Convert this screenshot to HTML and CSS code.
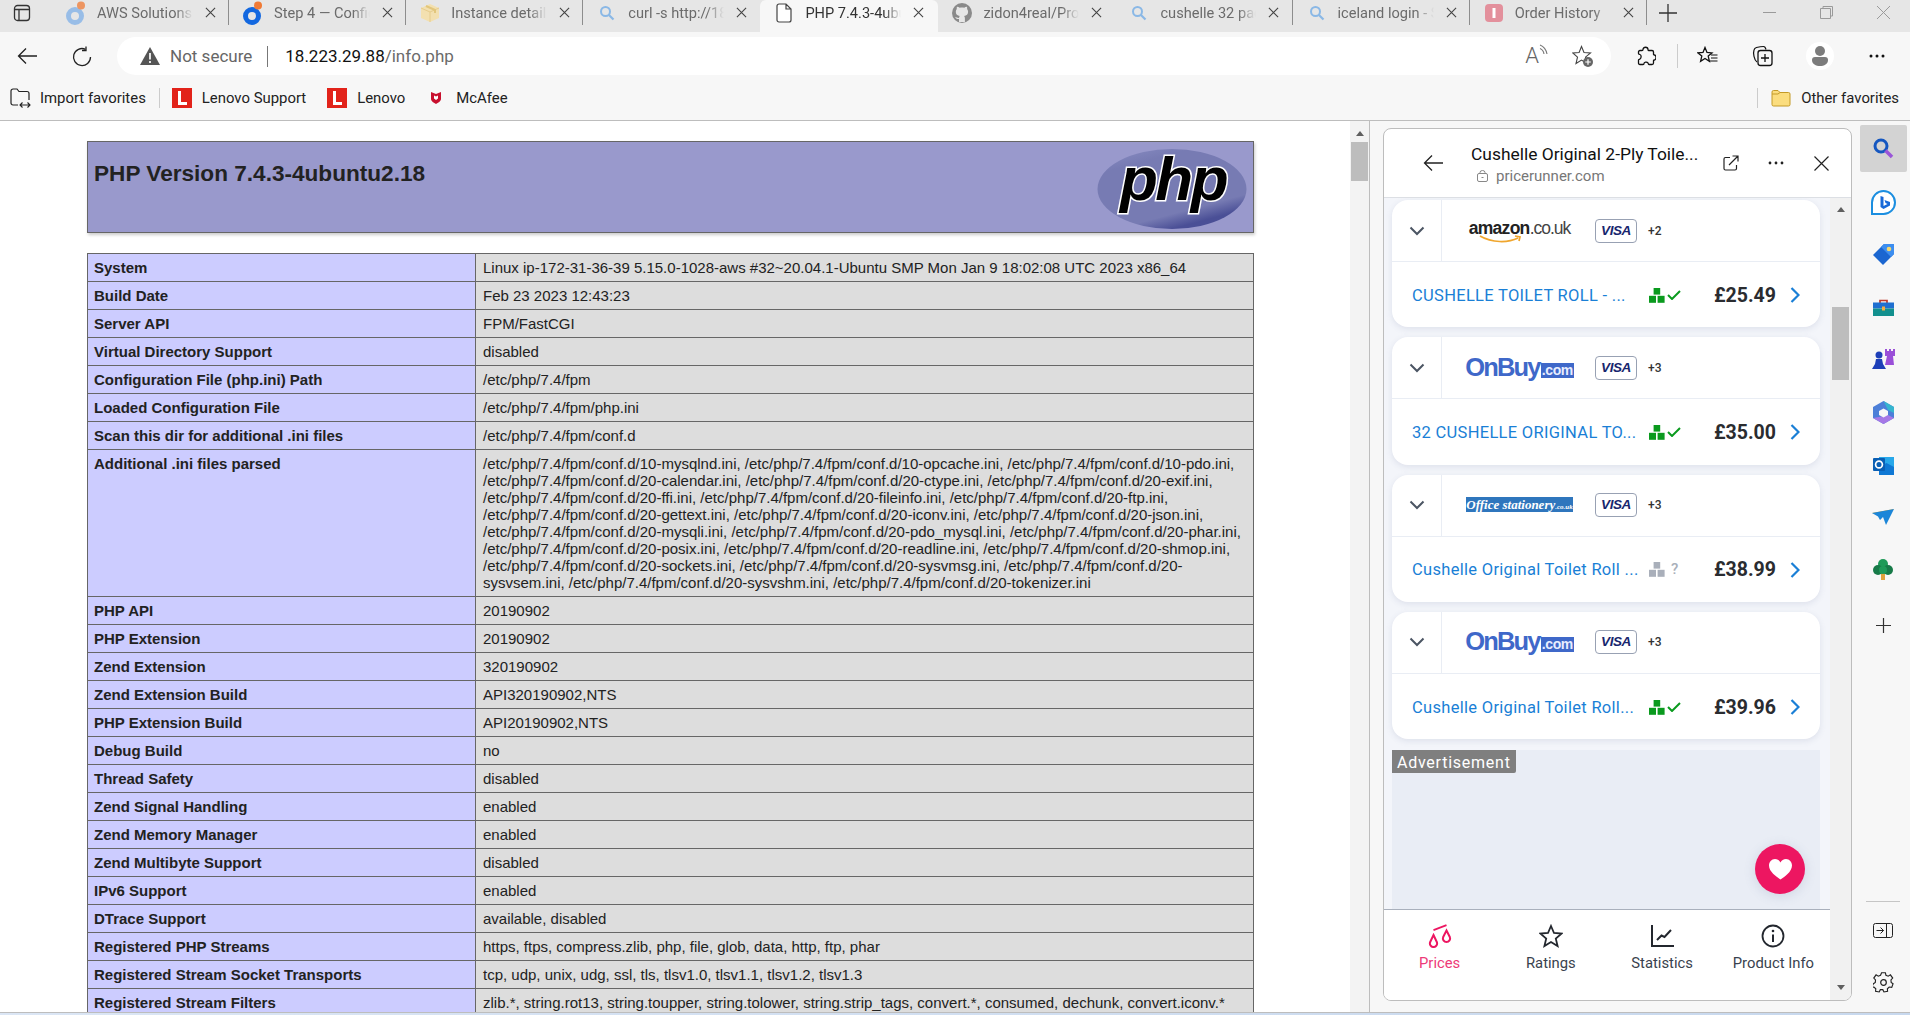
FILE: index.html
```html
<!DOCTYPE html>
<html lang="en">
<head>
<meta charset="utf-8">
<title>PHP 7.4.3-4ubuntu2.18 - phpinfo()</title>
<link rel="stylesheet" href="styles.css">
</head>
<body>
<svg class="defs" width="0" height="0" aria-hidden="true">
  <defs><linearGradient id="phpshade" x1="0" y1="0" x2="0.5" y2="1"><stop offset="0" stop-color="#8b8fc4"/><stop offset=".25" stop-color="#777bb3"/><stop offset=".85" stop-color="#777bb3"/><stop offset="1" stop-color="#4a4f96"/></linearGradient></defs>
  <symbol id="x" viewBox="0 0 12 12"><path d="M1 1l10 10M11 1L1 11" fill="none" stroke="currentColor" stroke-width="1.2"/></symbol>
  <symbol id="search" viewBox="0 0 16 16"><circle cx="6.5" cy="6.5" r="4.5" fill="none" stroke="#8ab8e6" stroke-width="2"/><path d="M10 10l4.5 4.5" stroke="#8ab8e6" stroke-width="2.2"/></symbol>
  <symbol id="swirl" viewBox="0 0 20 24"><circle cx="9" cy="15" r="6.5" fill="none" stroke="currentColor" stroke-width="5"/><circle cx="15" cy="4.5" r="4" fill="#f07a35"/></symbol>
  <symbol id="lenovo" viewBox="0 0 20 20"><rect width="20" height="20" fill="#e2231a"/><path d="M6 3v14h9v-3H9V3z" fill="#fff"/></symbol>
  <symbol id="chev-down" viewBox="0 0 16 10"><path d="M1.5 1.5L8 8l6.5-6.5" fill="none" stroke="#4b5563" stroke-width="2"/></symbol>
  <symbol id="chev-right" viewBox="0 0 10 16"><path d="M1.5 1L8.5 8l-7 7" fill="none" stroke="#1a7fd6" stroke-width="2.2"/></symbol>
  <symbol id="stock" viewBox="0 0 16 15"><rect x="4.6" y="0" width="6.6" height="6.6" fill="currentColor"/><rect x="0" y="7.8" width="7" height="7" fill="currentColor"/><rect x="8.6" y="7.8" width="7" height="7" fill="currentColor"/></symbol>
  <symbol id="check" viewBox="0 0 14 10"><path d="M1 5l4 4 8-8" fill="none" stroke="#0a9a1e" stroke-width="2"/></symbol>
</svg>

<header class="chrome">
  <div class="tabstrip">
    <div class="tabstrip-btn">
      <svg width="18" height="18" viewBox="0 0 18 18"><rect x="1.5" y="1.5" width="15" height="15" rx="3" fill="none" stroke="#333" stroke-width="1.3"/><path d="M1.5 5.5h15M6 5.5v11" stroke="#333" stroke-width="1.3" fill="none"/></svg>
    </div>
    <div class="tab">
      <svg class="fav fav-soft" width="20" height="24"><use href="#swirl"/></svg>
      <span class="tab-title">AWS Solutions</span>
      <svg class="tab-x" width="11" height="11"><use href="#x"/></svg>
    </div>
    <div class="tab">
      <svg class="fav fav-strong" width="20" height="24"><use href="#swirl"/></svg>
      <span class="tab-title">Step 4 — Configure</span>
      <svg class="tab-x" width="11" height="11"><use href="#x"/></svg>
    </div>
    <div class="tab">
      <svg class="fav" width="20" height="20" viewBox="0 0 20 20"><path d="M10 1l9 4v10l-9 4-9-4V5z" fill="#f3e0b0"/><path d="M1 5l9 4 9-4M10 9v10" fill="none" stroke="#e6cc8c"/><path d="M6 3l9 4v3" fill="none" stroke="#e2c67c" stroke-width="2"/></svg>
      <span class="tab-title">Instance details</span>
      <svg class="tab-x" width="11" height="11"><use href="#x"/></svg>
    </div>
    <div class="tab tab-before-active">
      <svg class="fav" width="16" height="16"><use href="#search"/></svg>
      <span class="tab-title">curl -s http://18.223</span>
      <svg class="tab-x" width="11" height="11"><use href="#x"/></svg>
    </div>
    <div class="tab tab-active">
      <svg class="fav" width="16" height="20" viewBox="0 0 16 20"><path d="M3 1h7l5 5v11a2 2 0 0 1-2 2H3a2 2 0 0 1-2-2V3a2 2 0 0 1 2-2zM10 1v5h5" fill="#fff" stroke="#444" stroke-width="1.2"/></svg>
      <span class="tab-title">PHP 7.4.3-4ubuntu2.18</span>
      <svg class="tab-x" width="11" height="11"><use href="#x"/></svg>
    </div>
    <div class="tab tab-after-active">
      <svg class="fav" width="20" height="20" viewBox="0 0 20 20"><circle cx="10" cy="10" r="10" fill="#8a8a8a"/><path d="M7 19v-3c-2 .3-3.200-.5-4-2 1.500 0 1.800 1 4 1 0-1 .4-1.600.8-2-2.500-.4-4-1.600-4-4.300 0-1 .4-1.900 1-2.600-.2-.8-.1-1.700.2-2.300 1 0 1.900.5 2.700 1 1.500-.4 3-.4 4.500 0 .8-.5 1.700-1 2.700-1 .3.600.4 1.500.2 2.300.6.700 1 1.600 1 2.600 0 2.700-1.500 3.900-4 4.300.5.500.8 1.200.8 2.200V19z" fill="#e6e6e6"/></svg>
      <span class="tab-title">zidon4real/Project</span>
      <svg class="tab-x" width="11" height="11"><use href="#x"/></svg>
    </div>
    <div class="tab">
      <svg class="fav" width="16" height="16"><use href="#search"/></svg>
      <span class="tab-title">cushelle 32 pack</span>
      <svg class="tab-x" width="11" height="11"><use href="#x"/></svg>
    </div>
    <div class="tab">
      <svg class="fav" width="16" height="16"><use href="#search"/></svg>
      <span class="tab-title">iceland login - Search</span>
      <svg class="tab-x" width="11" height="11"><use href="#x"/></svg>
    </div>
    <div class="tab">
      <svg class="fav" width="18" height="18" viewBox="0 0 18 18"><rect width="18" height="18" rx="4" fill="#e3909c"/><rect x="7.500" y="4" width="3" height="10" fill="#fff"/></svg>
      <span class="tab-title">Order History</span>
      <svg class="tab-x" width="11" height="11"><use href="#x"/></svg>
    </div>
    <div class="tab-plus">
      <svg width="18" height="18" viewBox="0 0 18 18"><path d="M9 0v18M0 9h18" stroke="#333" stroke-width="1.3"/></svg>
    </div>
    <div class="win-btns">
      <svg width="13" height="13" viewBox="0 0 13 13"><path d="M0 6.500h13" stroke="#9a9a9a"/></svg>
      <svg width="13" height="13" viewBox="0 0 13 13"><path d="M3 2V.5h9.500V10H11M.5 2.500h10v10H.5z" fill="none" stroke="#9a9a9a"/></svg>
      <svg width="13" height="13" viewBox="0 0 13 13"><path d="M0 0l13 13M13 0L0 13" stroke="#9a9a9a"/></svg>
    </div>
  </div>

  <div class="toolbar">
    <div class="tool">
      <svg width="20" height="18" viewBox="0 0 20 18"><path d="M20 9H1.500M9 1.500L1.500 9 9 16.500" fill="none" stroke="#222" stroke-width="1.3"/></svg>
    </div>
    <div class="tool tool-next">
      <svg width="20" height="21" viewBox="0 0 20 21"><path d="M13.500 3.300A8.500 8.500 0 1 0 18.500 11" fill="none" stroke="#222" stroke-width="1.3"/><path d="M14 .5v4h-4" fill="none" stroke="#222" stroke-width="1.3"/></svg>
    </div>
    <div class="address">
      <svg width="20" height="18" viewBox="0 0 20 18"><path d="M10 0l10 18H0z" fill="#555"/><path d="M10 6v6.500M10 14v2" stroke="#fff" stroke-width="1.700"/></svg>
      <span class="not-secure">Not secure</span>
      <span class="addr-sep"></span>
      <span class="url"><span class="url-host">18.223.29.88</span>/info.php</span>
      <span class="addr-end">
        <span class="read-aloud">A<svg width="9" height="14" viewBox="0 0 9 14"><path d="M1 1c4 1.500 6 4 7 9M1 4.500c2.500 1 3.500 2.500 4 5.500" fill="none" stroke="#777" stroke-width="1.100"/></svg></span>
        <svg width="21" height="22" viewBox="0 0 21 22"><path d="M9.500 1.500l2.500 6 6.500.5-5 4.200 1.500 6.300-5.500-3.400L4 18.500l1.500-6.300L.8 8l6.300-.5z" fill="none" stroke="#444" stroke-width="1.100"/><circle cx="16" cy="17" r="5" fill="#666"/><path d="M16 14.200v5.600M13.200 17h5.600" stroke="#fff" stroke-width="1.200"/></svg>
      </span>
    </div>
    <div class="tool tool-ext">
      <svg width="19" height="20" viewBox="0 0 19 20"><path d="M6 3.500c0-3 5-3 5 0 0 .5 0 1 .5 1H15c1 0 1.500.5 1.500 1.500v2.500c0 .5.500.5 1 .5 2 .5 2 4.500 0 5-.5 0-1 0-1 .5V17c0 1-.5 1.500-1.500 1.500h-3c-1 0-.5-1-1-1.500-1-1.500-4-1-4 .5 0 .5 0 1-1 1H3c-1 0-1.500-.5-1.500-1.500V14c0-1 1-.5 1.500-1 1.500-1 1.500-4 0-4.500-.5-.2-1.500 0-1.500-1V6c0-1 .5-1.500 1.500-1.500H5c.5 0 1 0 1-1z" fill="none" stroke="#111" stroke-width="1.300"/></svg>
    </div>
    <span class="tool-sep"></span>
    <div class="tool tool-fav">
      <svg width="21" height="20" viewBox="0 0 21 20"><path d="M8 1.500l2 5 5 .4-3.800 3.200 1.200 5.200L8 12.500l-4.400 2.800 1.200-5.200L1 6.900l5-.4z" fill="none" stroke="#111" stroke-width="1.300"/><path d="M14 9h6.500M14 12h6.500M13 15h7.500" stroke="#111" stroke-width="1.200"/></svg>
    </div>
    <div class="tool tool-coll">
      <svg width="21" height="22" viewBox="0 0 21 22"><path d="M5 17C2 15 1 8 2 5c.3-1 1-2 2.500-2.500 2-.5 5-1 7-1 1.500 0 2 1 2.500 3" fill="none" stroke="#111" stroke-width="1.200"/><rect x="6" y="5.500" width="14" height="15" rx="2.500" fill="none" stroke="#111" stroke-width="1.300"/><path d="M13 9v8M9 13h8" stroke="#111" stroke-width="1.300"/></svg>
    </div>
    <div class="tool tool-profile">
      <span class="avatar"><svg width="18" height="22" viewBox="0 0 18 22"><circle cx="9" cy="6" r="5" fill="#7c7c7c"/><path d="M1 15c0-2 1-3 3-3h10c2 0 3 1 3 3 0 4-4 6-8 6s-8-2-8-6z" fill="#7c7c7c"/></svg></span>
    </div>
    <div class="tool tool-more">
      <svg width="16" height="4" viewBox="0 0 16 4"><circle cx="2" cy="2" r="1.500" fill="#111"/><circle cx="8" cy="2" r="1.500" fill="#111"/><circle cx="14" cy="2" r="1.500" fill="#111"/></svg>
    </div>
  </div>

  <div class="favbar">
    <svg class="fb-ico" width="21" height="20" viewBox="0 0 21 20"><path d="M8 17H3a2 2 0 0 1-2-2V3a2 2 0 0 1 2-2h4l2 2.500h8a2 2 0 0 1 2 2V12" fill="none" stroke="#222" stroke-width="1.200"/><path d="M10 17h10M12.500 14.500L10 17l2.500 2.500M17.500 14.500L20 17l-2.500 2.500" fill="none" stroke="#222" stroke-width="1.100"/></svg>
    <span class="fb-text">Import favorites</span>
    <span class="fb-sep"></span>
    <svg class="fb-lenovo" width="20" height="20"><use href="#lenovo"/></svg>
    <span class="fb-text">Lenovo Support</span>
    <svg class="fb-lenovo fb-lenovo-2" width="20" height="20"><use href="#lenovo"/></svg>
    <span class="fb-text">Lenovo</span>
    <svg class="fb-mcafee" width="10" height="12" viewBox="0 0 10 12"><path d="M0 0l5 2 5-2v7c0 2-3 4-5 5-2-1-5-3-5-5z" fill="#c8102e"/><path d="M3 3.500l2 1 2-1v3L5 8 3 6.500z" fill="#fff"/></svg>
    <span class="fb-text">McAfee</span>
    <span class="fb-sep fb-sep-right"></span>
    <svg class="fb-folder" width="20" height="18" viewBox="0 0 20 18"><path d="M1 3a1.500 1.500 0 0 1 1.500-1.500H7l2 2h8.500A1.500 1.500 0 0 1 19 5v10.500a1.500 1.500 0 0 1-1.500 1.500h-15A1.500 1.500 0 0 1 1 15.500z" fill="#fbdd7e" stroke="#c49a26"/><path d="M1 5h6l2-1.500" fill="none" stroke="#c49a26"/></svg>
    <span class="fb-text">Other favorites</span>
  </div>
</header>

<main class="workspace">
  <div class="page">
    <div class="phpinfo">
      <div class="php-head">
        <svg class="php-logo" width="150" height="82" viewBox="0 0 150 82">
          <ellipse cx="75" cy="41" rx="74.500" ry="40" fill="url(#phpshade)"/>
          <text class="php-logo-text" x="76" y="52" text-anchor="middle">php</text>
        </svg>
        <h1>PHP Version 7.4.3-4ubuntu2.18</h1>
      </div>
      <table class="info">
        <tr><th>System</th><td>Linux ip-172-31-36-39 5.15.0-1028-aws #32~20.04.1-Ubuntu SMP Mon Jan 9 18:02:08 UTC 2023 x86_64</td></tr>
        <tr><th>Build Date</th><td>Feb 23 2023 12:43:23</td></tr>
        <tr><th>Server API</th><td>FPM/FastCGI</td></tr>
        <tr><th>Virtual Directory Support</th><td>disabled</td></tr>
        <tr><th>Configuration File (php.ini) Path</th><td>/etc/php/7.4/fpm</td></tr>
        <tr><th>Loaded Configuration File</th><td>/etc/php/7.4/fpm/php.ini</td></tr>
        <tr><th>Scan this dir for additional .ini files</th><td>/etc/php/7.4/fpm/conf.d</td></tr>
        <tr><th>Additional .ini files parsed</th><td>/etc/php/7.4/fpm/conf.d/10-mysqlnd.ini, /etc/php/7.4/fpm/conf.d/10-opcache.ini, /etc/php/7.4/fpm/conf.d/10-pdo.ini,<br>/etc/php/7.4/fpm/conf.d/20-calendar.ini, /etc/php/7.4/fpm/conf.d/20-ctype.ini, /etc/php/7.4/fpm/conf.d/20-exif.ini,<br>/etc/php/7.4/fpm/conf.d/20-ffi.ini, /etc/php/7.4/fpm/conf.d/20-fileinfo.ini, /etc/php/7.4/fpm/conf.d/20-ftp.ini,<br>/etc/php/7.4/fpm/conf.d/20-gettext.ini, /etc/php/7.4/fpm/conf.d/20-iconv.ini, /etc/php/7.4/fpm/conf.d/20-json.ini,<br>/etc/php/7.4/fpm/conf.d/20-mysqli.ini, /etc/php/7.4/fpm/conf.d/20-pdo_mysql.ini, /etc/php/7.4/fpm/conf.d/20-phar.ini,<br>/etc/php/7.4/fpm/conf.d/20-posix.ini, /etc/php/7.4/fpm/conf.d/20-readline.ini, /etc/php/7.4/fpm/conf.d/20-shmop.ini,<br>/etc/php/7.4/fpm/conf.d/20-sockets.ini, /etc/php/7.4/fpm/conf.d/20-sysvmsg.ini, /etc/php/7.4/fpm/conf.d/20-<br>sysvsem.ini, /etc/php/7.4/fpm/conf.d/20-sysvshm.ini, /etc/php/7.4/fpm/conf.d/20-tokenizer.ini</td></tr>
        <tr><th>PHP API</th><td>20190902</td></tr>
        <tr><th>PHP Extension</th><td>20190902</td></tr>
        <tr><th>Zend Extension</th><td>320190902</td></tr>
        <tr><th>Zend Extension Build</th><td>API320190902,NTS</td></tr>
        <tr><th>PHP Extension Build</th><td>API20190902,NTS</td></tr>
        <tr><th>Debug Build</th><td>no</td></tr>
        <tr><th>Thread Safety</th><td>disabled</td></tr>
        <tr><th>Zend Signal Handling</th><td>enabled</td></tr>
        <tr><th>Zend Memory Manager</th><td>enabled</td></tr>
        <tr><th>Zend Multibyte Support</th><td>disabled</td></tr>
        <tr><th>IPv6 Support</th><td>enabled</td></tr>
        <tr><th>DTrace Support</th><td>available, disabled</td></tr>
        <tr><th>Registered PHP Streams</th><td>https, ftps, compress.zlib, php, file, glob, data, http, ftp, phar</td></tr>
        <tr><th>Registered Stream Socket Transports</th><td>tcp, udp, unix, udg, ssl, tls, tlsv1.0, tlsv1.1, tlsv1.2, tlsv1.3</td></tr>
        <tr><th>Registered Stream Filters</th><td>zlib.*, string.rot13, string.toupper, string.tolower, string.strip_tags, convert.*, consumed, dechunk, convert.iconv.*</td></tr>
      </table>
    </div>
  </div>

  <div class="page-scroll">
    <span class="arrow-up"></span>
    <span class="page-thumb"></span>
  </div>

  <div class="side-area">
    <section class="panel">
      <div class="panel-head">
        <svg class="ph-back" width="20" height="18" viewBox="0 0 20 18"><path d="M20 9H1.500M9 1.500L1.500 9 9 16.500" fill="none" stroke="#222" stroke-width="1.300"/></svg>
        <div class="ph-title">
          <div class="ph-name">Cushelle Original 2-Ply Toile...</div>
          <div class="ph-site">
            <svg width="11" height="12" viewBox="0 0 11 12"><rect x=".5" y="3.500" width="10" height="8" rx="1.500" fill="none" stroke="#888"/><path d="M3 3.500V2.500a2.500 2 0 0 1 5 0v1M4.500 7.500h2" fill="none" stroke="#888"/></svg>
            <span>pricerunner.com</span>
          </div>
        </div>
        <svg class="ph-ext" width="16" height="16" viewBox="0 0 16 16"><path d="M7 2.500H2.500A1.500 1.500 0 0 0 1 4v9.500A1.500 1.500 0 0 0 2.500 15H12a1.500 1.500 0 0 0 1.500-1.500V10M6 10L15 1M9.500 1H15v5.500" fill="none" stroke="#222" stroke-width="1.200"/></svg>
        <svg class="ph-more" width="16" height="4" viewBox="0 0 16 4"><circle cx="2" cy="2" r="1.400" fill="#222"/><circle cx="8" cy="2" r="1.400" fill="#222"/><circle cx="14" cy="2" r="1.400" fill="#222"/></svg>
        <svg class="ph-close" width="15" height="15" viewBox="0 0 15 15"><path d="M.5.5l14 14M14.500.5l-14 14" stroke="#222" stroke-width="1.200"/></svg>
      </div>
      <div class="panel-body">
        <div class="panel-main">
          <div class="offers">
            <article class="card">
              <div class="card-top">
                <div class="card-chev"><svg width="16" height="10"><use href="#chev-down"/></svg></div>
                <div class="logo"><span class="amazon">amazon<span class="amazon-tld">.co.uk</span><svg class="amazon-smile" width="44" height="8" viewBox="0 0 44 8"><path d="M1 1c12 7 28 7 38 2M36 1l5 1-1 4" fill="none" stroke="#f0a62e" stroke-width="1.700"/></svg></span></div>
                <span class="visa">VISA</span><span class="plus">+2</span>
              </div>
              <div class="card-bottom">
                <span class="offer-name">CUSHELLE TOILET ROLL - ...</span>
                <svg class="stock" width="16" height="15"><use href="#stock"/></svg>
                <svg class="check" width="14" height="10"><use href="#check"/></svg>
                <span class="price">£25.49</span>
                <svg class="go" width="10" height="16"><use href="#chev-right"/></svg>
              </div>
            </article>
            <article class="card">
              <div class="card-top">
                <div class="card-chev"><svg width="16" height="10"><use href="#chev-down"/></svg></div>
                <div class="logo"><span class="onbuy">OnBuy<span class="onbuy-tld">.com</span></span></div>
                <span class="visa">VISA</span><span class="plus">+3</span>
              </div>
              <div class="card-bottom">
                <span class="offer-name">32 CUSHELLE ORIGINAL TO...</span>
                <svg class="stock" width="16" height="15"><use href="#stock"/></svg>
                <svg class="check" width="14" height="10"><use href="#check"/></svg>
                <span class="price">£35.00</span>
                <svg class="go" width="10" height="16"><use href="#chev-right"/></svg>
              </div>
            </article>
            <article class="card">
              <div class="card-top">
                <div class="card-chev"><svg width="16" height="10"><use href="#chev-down"/></svg></div>
                <div class="logo"><span class="office">Office stationery<small>.co.uk</small></span></div>
                <span class="visa">VISA</span><span class="plus">+3</span>
              </div>
              <div class="card-bottom">
                <span class="offer-name">Cushelle Original Toilet Roll ...</span>
                <svg class="stock stock-unknown" width="16" height="15"><use href="#stock"/></svg>
                <span class="unknown">?</span>
                <span class="price">£38.99</span>
                <svg class="go" width="10" height="16"><use href="#chev-right"/></svg>
              </div>
            </article>
            <article class="card">
              <div class="card-top">
                <div class="card-chev"><svg width="16" height="10"><use href="#chev-down"/></svg></div>
                <div class="logo"><span class="onbuy">OnBuy<span class="onbuy-tld">.com</span></span></div>
                <span class="visa">VISA</span><span class="plus">+3</span>
              </div>
              <div class="card-bottom">
                <span class="offer-name">Cushelle Original Toilet Roll...</span>
                <svg class="stock" width="16" height="15"><use href="#stock"/></svg>
                <svg class="check" width="14" height="10"><use href="#check"/></svg>
                <span class="price">£39.96</span>
                <svg class="go" width="10" height="16"><use href="#chev-right"/></svg>
              </div>
            </article>
            <div class="ad"><span class="ad-label">Advertisement</span></div>
            <button class="fab" type="button" aria-label="Favourite">
              <svg width="23" height="21" viewBox="0 0 23 21"><path d="M11.500 20.500C8 18 0 13 0 6.500 0 3 2.500 0 6 0c2.500 0 4.500 1.500 5.500 3.500C12.500 1.500 14.500 0 17 0c3.500 0 6 3 6 6.500 0 6.500-8 11.500-11.500 14z" fill="#fff"/></svg>
            </button>
          </div>
          <nav class="pr-tabs">
            <div class="pr-tab pr-tab-on">
              <svg width="24" height="24" viewBox="0 0 24 24"><path d="M5.500 6.200L18.500 1.200" stroke="#ed1661" stroke-width="1.800"/><path d="M5.500 11l3.300 7a3.600 3.600 0 1 1-6.600 0z" fill="none" stroke="#ed1661" stroke-width="2"/><path d="M18.500 6.500l3.300 6.500a3.600 3.600 0 1 1-6.600 0z" fill="none" stroke="#ed1661" stroke-width="2"/></svg>
              <span>Prices</span>
            </div>
            <div class="pr-tab">
              <svg width="24" height="24" viewBox="0 0 24 24"><path d="M12 2l3 7 7.500.6-5.700 5 1.800 7.400-6.600-4-6.600 4 1.800-7.400-5.700-5L9 9z" fill="none" stroke="#23272e" stroke-width="1.800"/></svg>
              <span>Ratings</span>
            </div>
            <div class="pr-tab">
              <svg width="24" height="24" viewBox="0 0 24 24"><path d="M2 1v21h22" fill="none" stroke="#23272e" stroke-width="2"/><path d="M7 16l4.500-4.500 3 1.500L21 6" fill="none" stroke="#23272e" stroke-width="2"/></svg>
              <span>Statistics</span>
            </div>
            <div class="pr-tab">
              <svg width="24" height="24" viewBox="0 0 24 24"><circle cx="12" cy="12" r="10.500" fill="none" stroke="#23272e" stroke-width="1.800"/><path d="M12 10.500V18" stroke="#23272e" stroke-width="2"/><circle cx="12" cy="7" r="1.300" fill="#23272e"/></svg>
              <span>Product Info</span>
            </div>
          </nav>
        </div>
        <div class="panel-scroll">
          <span class="arrow-up"></span>
          <span class="panel-thumb"></span>
          <span class="arrow-down"></span>
        </div>
      </div>
    </section>

    <aside class="sidebar">
      <div class="side-item side-on"><svg width="21" height="21" viewBox="0 0 21 21"><circle cx="8" cy="8" r="6" fill="none" stroke="#1557c0" stroke-width="3"/><path d="M12.500 12.500l6.500 6.500" stroke="#9a55d8" stroke-width="3.500"/></svg></div>
      <div class="side-item"><svg width="25" height="25" viewBox="0 0 25 25"><path d="M12.500 1a11.500 11.500 0 0 1 0 23H1V12.500A11.500 11.500 0 0 1 12.500 1z" fill="#fff" stroke="#1b8ee0" stroke-width="2"/><path d="M9.500 6l3 1v9l4-2-2-1-1-3 5.500 2v3.500l-6.500 3.500-3-2z" fill="#1668d8"/></svg></div>
      <div class="side-item"><svg width="21" height="21" viewBox="0 0 21 21"><path d="M11 0h10v10L10 21 0 11z" fill="#1b66d0"/><path d="M11 0h10v10l-3 3L8 3z" fill="#3d8ef0"/><circle cx="16" cy="5" r="2.300" fill="#f5d76e"/></svg></div>
      <div class="side-item"><svg width="21" height="17" viewBox="0 0 21 17"><path d="M7 4V1.500h7V4" fill="none" stroke="#c0392b" stroke-width="1.700"/><rect y="3.500" width="21" height="6" fill="#1f6fd0"/><rect y="9.500" width="21" height="7.500" fill="#12908e"/><rect x="9" y="7.500" width="3" height="4" fill="#f5b041"/></svg></div>
      <div class="side-item"><svg width="23" height="23" viewBox="0 0 23 23"><circle cx="7" cy="7" r="3.500" fill="#1d3fb8"/><path d="M4 11h6l1 5 3 5H0l3-5z" fill="#1d3fb8"/><path d="M13 1h2v2h2V1h2v2h2V1h2v7h-2l1 9H13l2-9h-2z" fill="#9a4fd8"/></svg></div>
      <div class="side-item"><svg width="21" height="23" viewBox="0 0 21 23"><path d="M10.500 0L21 6v11l-10.500 6L0 17V6z" fill="#4d7fd8"/><path d="M10.500 0L21 6v6l-6-3z" fill="#36b5cf"/><path d="M0 17l10.500 6L21 17l-6-3-9 2z" fill="#a678e6"/><path d="M10.500 7.500l4.500 2.500v4l-4.500 2.500L6 14v-4z" fill="#f7f7f7"/></svg></div>
      <div class="side-item"><svg width="21" height="21" viewBox="0 0 21 21"><rect x="6" y="3" width="15" height="16" fill="#28a8ea"/><path d="M6 13l7.500-4L21 13v8H6z" fill="#0f78d4"/><rect y="4" width="12" height="13" rx="1" fill="#0a5fb4"/><circle cx="6" cy="10.500" r="3.400" fill="none" stroke="#fff" stroke-width="1.700"/></svg></div>
      <div class="side-item"><svg width="22" height="16" viewBox="0 0 22 16"><path d="M0 4l22-4-9 7z" fill="#f2a91f"/><path d="M0 4l6 3.500 2 3.500 3-3 3 8 8-16z" fill="#1c86d8"/></svg></div>
      <div class="side-item"><svg width="20" height="21" viewBox="0 0 20 21"><rect x="8" y="14" width="4" height="7" fill="#e0a23c"/><circle cx="10" cy="5" r="5" fill="#1e9a58"/><circle cx="5" cy="11" r="5" fill="#177a48"/><circle cx="15" cy="11" r="5" fill="#177a48"/><circle cx="10" cy="11" r="4" fill="#1e9a58"/></svg></div>
      <div class="side-item side-add"><svg width="15" height="15" viewBox="0 0 15 15"><path d="M7.500 0v15M0 7.500h15" stroke="#333" stroke-width="1.200"/></svg></div>
      <div class="side-spacer"></div>
      <div class="side-rule"></div>
      <div class="side-item"><svg width="20" height="15" viewBox="0 0 20 15"><rect x=".5" y=".5" width="19" height="14" rx="2" fill="none" stroke="#222"/><path d="M13.500.5v14M3.500 7.500h7M7.500 4.500l3 3-3 3" fill="none" stroke="#222"/></svg></div>
      <div class="side-item"><svg width="21" height="21" viewBox="0 0 21 21"><path d="M8.500 1h4l.6 2.600 2.400 1 2.300-1.400 2.400 3.400-1.800 2 .2 2.600 2 1.400-1.400 3.800-2.700-.4-1.900 1.900.2 2.600-3.800.7-1.200-2.400h-2.600l-1.200 2.400-3.800-.7.200-2.600-1.900-1.900-2.700.4L-.1 12.600l2-1.400.2-2.600-1.800-2L2.700 3.200 5 4.600l2.400-1z" transform="translate(.5 -.2) scale(.95)" fill="none" stroke="#222" stroke-width="1.200"/><circle cx="10.500" cy="10.500" r="2.800" fill="none" stroke="#222" stroke-width="1.200"/></svg></div>
    </aside>
  </div>
</main>
<div class="taskbar"></div>
</body>
</html>
```
FILE: styles.css
```css
* { box-sizing: border-box; }
html, body { margin: 0; padding: 0; height: 100%; overflow: hidden; background: #fff; }
body { display: flex; flex-direction: column; font-family: Roboto, "Noto Sans", sans-serif; color: #222; }
.defs { position: absolute; }
svg { display: block; flex: none; }

/* window chrome */
.chrome { flex: none; background: #f7f7f7; border-bottom: 1px solid #bdbdbd; }
.tabstrip { height: 32px; background: #e6e6e6; display: flex; align-items: center; padding-bottom: 7px; overflow: visible; }
.tabstrip-btn { width: 52px; height: 25px; display: flex; align-items: center; justify-content: center; padding-right: 8px; }
.tab { width: 177.1px; height: 32px; margin-bottom: -7px; display: flex; align-items: center; position: relative; padding: 0 0 7px 14px; color: #6b6b6b; font-size: 14.6px; }
.tab::after { content: ""; position: absolute; right: 0; top: 0; height: 25px; width: 1px; background: #8d8d8d; }
.tab-before-active::after, .tab-active::after, .tab-after-active::after { display: none; }
.tab-before-active { border-bottom-right-radius: 6px; }
.tab-active { background: #f7f7f7; color: #333; border-radius: 6px 6px 0 0; width: 178px; }
.fav { margin-right: 11px; margin-left: 0; width: 20px; }
.fav-soft { color: #7fb0e8; opacity: .75; }
.fav-strong { color: #1368e0; }
.tab-title { width: 96px; overflow: hidden; white-space: nowrap; -webkit-mask-image: linear-gradient(to right, #000 82%, transparent); mask-image: linear-gradient(to right, #000 82%, transparent); }
.tab-x { margin-left: 12px; color: #444; }
.tab-plus { width: 50px; display: flex; justify-content: center; padding-right: 8px; }
.win-btns { flex: 1; display: flex; justify-content: flex-end; gap: 44px; padding-right: 20px; }

.toolbar { height: 48px; display: flex; align-items: center; padding-left: 7px; }
.tool { width: 40px; height: 38px; display: flex; align-items: center; justify-content: center; flex: none; }
.tool-next { margin-left: 15px; }
.address { flex: 1; height: 38px; margin-left: 15px; background: #fff; border-radius: 19px; display: flex; align-items: center; padding: 0 18px 0 23px; font-size: 17px; }
.not-secure { margin-left: 10px; color: #666; }
.addr-sep { width: 1px; height: 21px; background: #777; margin: 0 17px 0 15px; }
.url { color: #6b6b6b; }
.url-host { color: #111; }
.addr-end { margin-left: auto; display: flex; align-items: center; gap: 24px; }
.read-aloud { display: flex; align-items: flex-start; color: #666; font-size: 22px; line-height: 24px; font-weight: 300; }
.tool-ext { margin-left: 15px; }
.tool-sep { width: 1px; height: 24px; background: #ccc; margin-left: 11px; flex: none; }
.tool-fav { margin-left: 9px; }
.tool-coll { margin-left: 15px; }
.tool-profile { margin-left: 18px; }
.tool-more { margin: 0 13px 0 17px; }
.avatar { width: 28px; height: 28px; border-radius: 50%; background: #fff; display: flex; align-items: center; justify-content: center; }

.favbar { height: 40px; display: flex; align-items: center; padding: 0 11px 4px 10px; font-size: 14.9px; color: #222; }
.fb-text { white-space: nowrap; }
.fb-ico { margin-right: 9px; }
.fb-sep { width: 1px; height: 20px; background: #ccc; margin: 0 12px 0 13px; flex: none; }
.fb-lenovo { margin-right: 10px; }
.fb-lenovo-2 { margin-left: 21px; }
.fb-mcafee { margin: 0 15px 0 26px; }
.fb-sep-right { margin-left: auto; margin-right: 13px; }
.fb-folder { margin-right: 10px; }

/* workspace */
.workspace { flex: 1; min-height: 0; display: flex; }
.page { width: 1350px; flex: none; overflow: hidden; background: #fff; }
.phpinfo { width: 1167px; margin: 20px 0 0 87px; font-family: "Liberation Sans", Arial, sans-serif; font-size: 15px; line-height: 17px; color: #222; }
.php-head { height: 92px; background: #99c; border: 1px solid #666; box-shadow: 1px 2px 3px #ccc; padding: 18px 6px 0; }
.php-head h1 { margin: 0; font-size: 22.6px; line-height: 28px; font-weight: bold; color: #222; }
.php-logo { float: right; margin-top: -12px; margin-right: 0; }
.php-logo-text { font-family: "Liberation Sans", sans-serif; font-style: italic; font-weight: bold; font-size: 62px; letter-spacing: -2.5px; fill: #000; stroke: #fff; stroke-width: 3px; paint-order: stroke; }
.info { width: 1167px; margin-top: 20px; border-collapse: collapse; table-layout: fixed; }
.info th, .info td { border: 1px solid #666; padding: 5px 7px; text-align: left; vertical-align: top; }
.info th { width: 388px; padding-left: 6px; background: #ccf; font-weight: bold; }
.info td { background: #ddd; font-weight: normal; }

.page-scroll { width: 20px; flex: none; background: #f3f3f3; border-right: 1px solid #bdbdbd; position: relative; display: flex; flex-direction: column; align-items: center; }
.arrow-up, .arrow-down { width: 0; height: 0; border-left: 4.5px solid transparent; border-right: 4.5px solid transparent; display: block; flex: none; }
.arrow-up { border-bottom: 5px solid #5f5f5f; margin-top: 10px; }
.arrow-down { border-top: 5px solid #5f5f5f; margin-bottom: 10px; margin-top: auto; }
.page-thumb { width: 17px; height: 39px; background: #bdbdbd; margin-top: 6px; flex: none; }

.side-area { flex: 1; min-width: 0; display: flex; padding: 7px 0 11px 13px; background: #f7f7f7; }
.panel { width: 469px; flex: none; background: #fff; border: 1px solid #bdbdbd; border-radius: 8px; overflow: hidden; display: flex; flex-direction: column; }
.panel-head { height: 69px; flex: none; display: flex; align-items: center; border-bottom: 1px solid #dcdfe4; padding-left: 39px; }
.ph-title { width: 252px; margin-left: 28px; margin-top: 3px; }
.ph-name { font-size: 17.4px; line-height: 22px; color: #111; white-space: nowrap; }
.ph-site { display: flex; align-items: center; gap: 8px; font-size: 15px; line-height: 20px; color: #777; padding-left: 6px; margin-top: 1px; }
.ph-more { margin-left: 29px; }
.ph-close { margin-left: 30px; }

.panel-body { flex: 1; min-height: 0; display: flex; }
.panel-main { flex: 1; min-width: 0; display: flex; flex-direction: column; }
.offers { flex: 1; min-height: 0; background: #f3f5fa; padding: 2px 10px 0 8px; position: relative; overflow: hidden; display: flex; flex-direction: column; gap: 10px; }
.card { height: 127.33px; flex: none; background: #fff; border-radius: 16px; box-shadow: 0 2px 6px rgba(90,105,150,.14); display: flex; flex-direction: column; }
.card-top { height: 62px; flex: none; display: flex; align-items: center; border-bottom: 1px solid #e9edf4; }
.card-chev { width: 50px; height: 61px; flex: none; display: flex; align-items: center; justify-content: center; border-right: 1px solid #e9edf4; }
.logo { width: 107px; margin-left: 24px; display: flex; justify-content: center; flex: none; }
.amazon { position: relative; font-family: "Liberation Sans", sans-serif; font-weight: bold; font-size: 17.5px; letter-spacing: -.7px; color: #222; line-height: 20px; padding-bottom: 5px; }
.amazon-tld { font-weight: normal; letter-spacing: -1px; color: #444; }
.amazon-smile { position: absolute; left: 10px; top: 17px; }
.onbuy { font-family: "Liberation Sans", sans-serif; font-weight: bold; font-size: 25.5px; letter-spacing: -1.800px; color: #3f68c9; line-height: 28px; display: flex; align-items: flex-end; margin-top: -2px; }
.onbuy-tld { font-size: 14px; line-height: 15px; letter-spacing: -.4px; background: #3f68c9; color: #e8edff; padding: 0 1px; margin-bottom: 3px; margin-left: 1px; }
.office { width: 107px; height: 15px; margin-top: -2px; background: #2f76bd; color: #fff; font-family: "Liberation Serif", serif; font-style: italic; font-weight: bold; font-size: 13px; line-height: 15px; text-align: center; white-space: nowrap; overflow: hidden; }
.office small { font-size: 7px; }
.visa { width: 42px; height: 24px; margin-left: 22px; border: 1px solid #98a1b3; border-radius: 4px; flex: none; text-align: center; font-family: "Liberation Sans", sans-serif; font-style: italic; font-weight: bold; font-size: 13.5px; letter-spacing: -.4px; line-height: 22px; color: #18266e; }
.plus { margin-left: 11px; font-size: 12px; font-weight: 500; color: #333; }
.card-bottom { flex: 1; display: flex; align-items: center; padding: 1px 20px 0; }
.offer-name { width: 237px; flex: none; font-size: 16.5px; font-weight: 400; color: #1a7fd6; white-space: nowrap; overflow: hidden; letter-spacing: .3px; }
.stock { color: #0a9a1e; }
.stock-unknown { color: #a9afba; }
.check { margin-left: 2px; }
.unknown { margin-left: 6px; font-size: 15px; font-weight: 500; color: #a9afba; line-height: 15px; }
.price { margin-left: auto; font-size: 19.5px; font-weight: 700; color: #2a2c30; }
.go { margin-left: 14px; }
.ad { height: 160px; flex: none; background: #e9edf5; margin-top: 1px; }
.ad-label { display: inline-block; height: 23px; padding: 0 5px; background: #7f7f7f; color: #fff; font-size: 16px; line-height: 25px; letter-spacing: .75px; border-radius: 0 0 2px 0; }
.fab { position: absolute; right: 25px; bottom: 15px; width: 50px; height: 50px; border: 0; padding: 0; border-radius: 50%; background: #ed1661; box-shadow: 0 2px 12px rgba(90,105,150,.18); display: flex; align-items: center; justify-content: center; }
.pr-tabs { height: 91px; flex: none; background: #fff; border-top: 1px solid #a9b0bc; display: grid; grid-template-columns: repeat(4, 1fr); padding: 14px 1px 0 0; }
.pr-tab { display: flex; flex-direction: column; align-items: center; font-size: 14.8px; line-height: 18px; color: #39424e; gap: 6px; }
.pr-tab-on { color: #ed3a78; }
.panel-scroll { width: 21px; flex: none; background: #f1f1f1; display: flex; flex-direction: column; align-items: center; }
.panel-scroll .arrow-up { margin-top: 9px; }
.panel-thumb { width: 17px; height: 73px; background: #bdbdbd; margin-top: 95px; flex: none; }

.sidebar { flex: 1; min-width: 0; display: flex; flex-direction: column; align-items: center; padding-left: 4px; margin-top: -3px; margin-bottom: -8px; }
.side-item { width: 47px; height: 52.5px; flex: none; display: flex; align-items: center; justify-content: center; }
.side-on { height: 47px; margin-bottom: 4px; background: #d3d3d3; border-radius: 2px; }
.side-add { margin-top: 3px; }
.side-spacer { flex: 1; min-height: 0; }
.side-rule { width: 34px; height: 1px; margin-bottom: 2px; background: #c6c6c6; flex: none; }

.taskbar { height: 3px; flex: none; border-top: 1px solid #bdbdbd; background: linear-gradient(to right, #dbe6f5, #c7d8ee); }
```
